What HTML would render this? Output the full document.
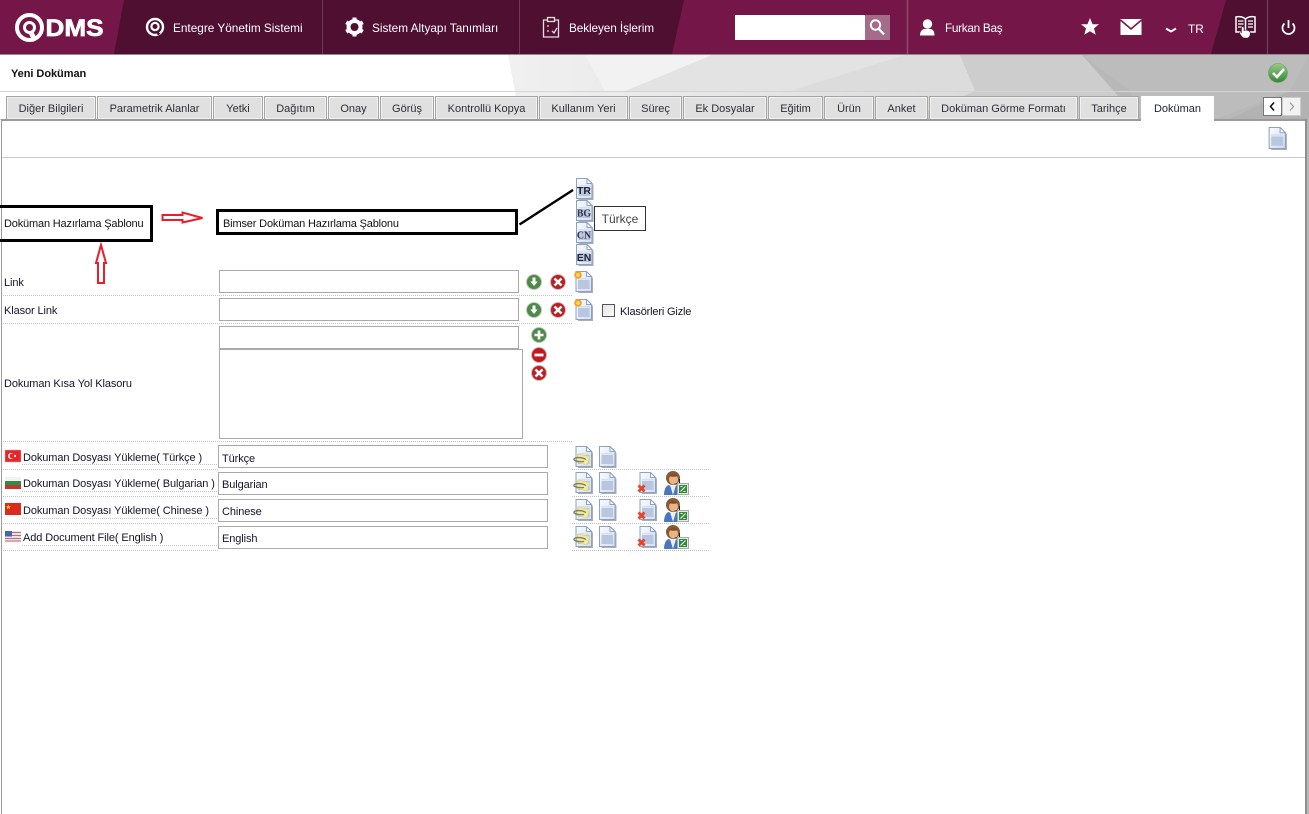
<!DOCTYPE html>
<html lang="tr"><head><meta charset="utf-8"><title>Yeni Doküman</title>
<style>
html,body{margin:0;padding:0;background:#fff;overflow:hidden}
body{width:1309px;height:814px;position:relative;font-family:"Liberation Sans",sans-serif;font-size:11px;letter-spacing:-.1px;color:#14142a}
.a{position:absolute}
.t{position:absolute;white-space:nowrap;line-height:14px}
.n{position:absolute;white-space:nowrap;color:#fff;font-size:11.8px;letter-spacing:0;line-height:16px;top:20px}
.tab{position:absolute;top:96px;height:23px;box-sizing:border-box;border:1px solid #a4a4a4;border-bottom:0;box-shadow:inset 0 0 0 1px #f1f1f1;background:#e0e0e0;text-align:center;font-size:11px;letter-spacing:0;line-height:24px;color:#2e2e3a;white-space:nowrap}
.tab.on{background:#fff;border-color:#fff;box-shadow:none;height:25px;z-index:3;color:#22223a}
.in{position:absolute;box-sizing:border-box;border:1px solid #a9a9a9;background:#fff}
.dot{position:absolute;height:0;border-top:1px dotted #c4c4c4}
.blk{position:absolute;box-sizing:border-box;border:3px solid #000;background:#fff}
svg{position:absolute;overflow:visible}
</style></head><body>
<svg width="0" height="0" style="position:absolute"><defs>
<linearGradient id="pg" x1="0" y1="0" x2="1" y2="1"><stop offset="0" stop-color="#fafcff"/><stop offset="1" stop-color="#d3deef"/></linearGradient>
<symbol id="doc" viewBox="0 0 18 22"><path d="M2 1h10l5 5v15H2z" fill="#6f7688" opacity=".6" transform="translate(1 1)"/><path d="M1 .5h10.500l5 5v15H1z" fill="url(#pg)" stroke="#8da1c4"/><path d="M11.500.5v5h5z" fill="#fff" stroke="#8da1c4"/><rect x="3" y="9" width="11.500" height="9" fill="#b8c6e0"/><rect x="3" y="7" width="11.500" height="1.500" fill="#d5dff0"/></symbol>
<symbol id="clip" viewBox="0 0 20 22"><use href="#doc" x="2" y="0" width="18" height="22"/><path d="M4.500 8l12 2.500-2 8.500-11-2.500z" fill="#efe99b" stroke="#d2cc76" stroke-width=".5"/><path d="M13 13.500C9 11 2 11 1 13c-1 2 5 3 10 2.500" fill="none" stroke="#7b7b70" stroke-width="1.300"/></symbol>
<symbol id="docx" viewBox="0 0 20 22"><use href="#doc" x="2" y="0" width="18" height="22"/><path d="M1.500 13.500l6 6M7.500 13.500l-6 6" stroke="#e8432a" stroke-width="2.800"/></symbol>
<symbol id="docs" viewBox="0 0 20 22"><use href="#doc" x="1" y="0" width="18" height="22"/><circle cx="4" cy="4" r="3.800" fill="#f79f2b"/><circle cx="4" cy="4" r="1.900" fill="#f6de52"/></symbol>
<symbol id="dn" viewBox="0 0 16 16"><circle cx="8" cy="8" r="7.500" fill="#4c8a48" stroke="#bfc9bd"/><path d="M6.500 3.500h3v4h2.200L8 12 4.300 7.500h2.200z" fill="#fff"/></symbol>
<symbol id="xx" viewBox="0 0 16 16"><circle cx="8" cy="8" r="7.500" fill="#bd1d24" stroke="#c9b9b9"/><path d="M4.500 4.500l7 7M11.500 4.500l-7 7" stroke="#fff" stroke-width="2.600"/></symbol>
<symbol id="pl" viewBox="0 0 16 16"><circle cx="8" cy="8" r="7.500" fill="#4c8a48" stroke="#bfc9bd"/><path d="M8 3.500v9M3.500 8h9" stroke="#fff" stroke-width="2.600"/></symbol>
<symbol id="mi" viewBox="0 0 16 16"><circle cx="8" cy="8" r="7.500" fill="#c5161d" stroke="#c9b9b9"/><path d="M3.500 8h9" stroke="#fff" stroke-width="2.800"/></symbol>
<symbol id="usr" viewBox="0 0 25 24"><path d="M0 24c0-7 3-10 5-10l4 3 4-3c2 0 3 3 3 10z" fill="#4a76c0"/><path d="M6 14h6l-3 10z" fill="#eee"/><ellipse cx="9" cy="7" rx="7" ry="7" fill="#8a5a35"/><ellipse cx="9.500" cy="8.500" rx="4.500" ry="5" fill="#e9b585"/><path d="M5 5c3-3 7-2 9 0-3 1-6 1-9 0z" fill="#7a4d2c"/><path d="M15.500 8v5h-5" fill="none" stroke="#222"/><rect x="13.500" y="12.500" width="11" height="11" fill="#e9e9e9" stroke="#aaa"/><rect x="15" y="14" width="8" height="8" fill="#2f8a35"/><path d="M16.500 20.500l5-5M16.500 15.500h2M21.500 20.500h-2" stroke="#fff"/></symbol>
</defs></svg>

<!-- header -->
<svg style="left:0;top:0" width="1309" height="55">
<rect width="1309" height="54" fill="#741748"/>
<path d="M124 0H684L672 54H114z" fill="#4e0f30"/>
<path d="M1226 0H1309V54H1211z" fill="#4e0f30"/>
<path d="M322.500 0V54M519.500 0V54" stroke="#6d3a55"/>
<path d="M907.500 0V54" stroke="#8f4a69" stroke-width="1.500"/>
<path d="M1267.500 0V54" stroke="#74405c" stroke-width="1.200"/>
<rect y="54" width="1309" height="1" fill="#8d8d8d"/>
<!-- logo -->
<circle cx="29.500" cy="27.500" r="12.500" fill="none" stroke="#fff" stroke-width="4"/>
<circle cx="29.500" cy="27.500" r="5" fill="none" stroke="#fff" stroke-width="3"/>
<path d="M28 32l5 10 4-3-4-8z" fill="#fff"/>
<text x="45.500" y="36" font-family="Liberation Sans" font-weight="700" font-size="24" textLength="58" lengthAdjust="spacingAndGlyphs" fill="#fff" stroke="#fff" stroke-width=".7" letter-spacing="0">DMS</text>
<!-- q icon -->
<circle cx="155" cy="27" r="8" fill="none" stroke="#fff" stroke-width="2.400"/>
<circle cx="155" cy="26.500" r="3.600" fill="none" stroke="#fff" stroke-width="2.200"/>
<path d="M155 30.500l3 5 2.500-2z" fill="#4e0f30"/>
<!-- gear -->
<g transform="translate(354.500 27)" fill="#fff"><circle r="6.200" fill="none" stroke="#fff" stroke-width="3.600"/>
<rect x="-2" y="-9.500" width="4" height="19"/><rect x="-2" y="-9.500" width="4" height="19" transform="rotate(60)"/><rect x="-2" y="-9.500" width="4" height="19" transform="rotate(120)"/><circle r="4" fill="#4e0f30"/></g>
<!-- clipboard -->
<g fill="none" stroke="#e6dce2" stroke-width="1.300"><path d="M547 20h-3.500v17h15V20H555"/><rect x="547.500" y="17.500" width="7" height="4"/><path d="M547 26h2M547 31h2M552 31l2 2 3-5"/></g>
<!-- search -->
<rect x="735" y="15" width="130" height="25" fill="#fff"/>
<rect x="865" y="15" width="25" height="25" fill="#a56c89"/>
<circle cx="875.500" cy="25" r="4.700" fill="none" stroke="#fff" stroke-width="2"/><path d="M879 29l5 5.500" stroke="#fff" stroke-width="2.400"/>
<!-- user -->
<circle cx="927.500" cy="24" r="4.700" fill="#fff"/><path d="M920 35.500c0-5 3-6.500 4.500-6.500h6c1.500 0 4 1.500 4 6.500z" fill="#fff"/>
<!-- star -->
<path d="M1090 18l2.500 6.200h6.500l-5 4.200 1.700 6.400-5.700-3.600-5.700 3.600 1.700-6.400-5-4.200h6.500z" fill="#fff"/>
<!-- mail -->
<rect x="1120.500" y="19" width="21" height="16" fill="#fff"/><path d="M1120.500 20l10.500 9 10.500-9" fill="none" stroke="#741748" stroke-width="1.600"/>
<!-- chevron -->
<path d="M1166 28.500l5 3 5-3" fill="none" stroke="#fff" stroke-width="2"/>
<!-- book -->
<g fill="none" stroke="#fff" stroke-width="1.500"><path d="M1245.500 19c-2-2-6-3-9.500-2v15h6.500l3 1 3-1h6.500V17c-3.500-1-7.500 0-9.500 2v14"/></g>
<path d="M1238 21h5.500M1238 24h5.500M1238 27h5.500M1248 21h5M1248 24h5M1248 27h5" stroke="#fff" stroke-width="1.200"/>
<path d="M1241.500 27c1-1 2.500 0 2.500 1v2.500c2-1 5 0 6 1.500 1 2 0 4.500-2 6h-4.500c-2-1-3-3-4-5 0-1 1-1.500 2-.5z" fill="#fff" stroke="#4e0f30" stroke-width=".6"/>
<!-- power -->
<path d="M1284.500 23.500a6 6 0 1 0 8 0" fill="none" stroke="#fff" stroke-width="1.800"/><path d="M1288.500 20v8" stroke="#fff" stroke-width="1.800"/>
</svg>
<span class="n" style="left:173px">Entegre Yönetim Sistemi</span>
<span class="n" style="left:372px">Sistem Altyapı Tanımları</span>
<span class="n" style="left:569px;letter-spacing:-.1px">Bekleyen İşlerim</span>
<span class="n" style="left:945px;letter-spacing:-.3px">Furkan Baş</span>
<span class="n" style="left:1188px;top:21px">TR</span>

<!-- polygon band -->
<svg style="left:0;top:55px" width="1309" height="66">
<defs><linearGradient id="bg" gradientUnits="userSpaceOnUse" x1="508" y1="0" x2="1000" y2="0"><stop offset="0" stop-color="#f0f0f0"/><stop offset=".5" stop-color="#e6e6e6"/><stop offset="1" stop-color="#d9d9d9"/></linearGradient></defs>
<rect width="1309" height="66" fill="#fff"/>
<path d="M508 0L515 36 517 66H1309V0z" fill="url(#bg)"/>
<path d="M585 0H712L625 36H605z" fill="#f2f2f2"/>
<path d="M712 0H905L790 36H625z" fill="#e3e3e3"/>
<path d="M905 0H965L975 36H790z" fill="#dcdcdc"/>
<path d="M960 0H1082L1140 66H905L975 36z" fill="#cdcdcd"/>
<path d="M1082 0H1309V66H1140z" fill="#b8b8b8"/>
<path d="M1082 0L1130 36 1145 66H1210L1290 36 1309 0z" fill="#bcbcbc"/>
<path d="M1225 66L1290 36H1309V66z" fill="#b2b2b2"/>
<rect y="36" width="1309" height="1" fill="#d4d4d4"/>
</svg>
<span class="t" style="left:11px;top:67px;font-weight:700;font-size:11px;color:#111;letter-spacing:-.05px">Yeni Doküman</span>
<svg style="left:1268px;top:62px" width="20" height="22"><defs><linearGradient id="gk" x1="0" y1="0" x2="0" y2="1"><stop offset="0" stop-color="#9cc78c"/><stop offset="1" stop-color="#2f8a32"/></linearGradient></defs><circle cx="10" cy="11" r="9.500" fill="url(#gk)" stroke="#6d9b63" stroke-width=".6"/><path d="M5 11l4 4 7-8" fill="none" stroke="#fff" stroke-width="2.600"/></svg>

<!-- tabs -->
<div class="tab" style="left:6px;width:90px">Diğer Bilgileri</div>
<div class="tab" style="left:97px;width:115px">Parametrik Alanlar</div>
<div class="tab" style="left:213px;width:50px">Yetki</div>
<div class="tab" style="left:264px;width:63px">Dağıtım</div>
<div class="tab" style="left:328px;width:51px">Onay</div>
<div class="tab" style="left:380px;width:54px">Görüş</div>
<div class="tab" style="left:435px;width:103px">Kontrollü Kopya</div>
<div class="tab" style="left:539px;width:89px">Kullanım Yeri</div>
<div class="tab" style="left:629px;width:53px">Süreç</div>
<div class="tab" style="left:683px;width:84px">Ek Dosyalar</div>
<div class="tab" style="left:768px;width:55px">Eğitim</div>
<div class="tab" style="left:824px;width:50px">Ürün</div>
<div class="tab" style="left:875px;width:53px">Anket</div>
<div class="tab" style="left:929px;width:149px">Doküman Görme Formatı</div>
<div class="tab" style="left:1079px;width:60px">Tarihçe</div>
<svg style="left:1263px;top:97px" width="38" height="19">
<rect x=".5" y=".5" width="18" height="18" fill="#fff" stroke="#777"/><path d="M11 5.500L7.500 9.500l3.500 4" fill="none" stroke="#111" stroke-width="1.600"/>
<rect x="19.500" y=".5" width="18" height="18" fill="#f2f2f2" stroke="#ccc"/><path d="M27 5.500l3.500 4-3.500 4" fill="none" stroke="#999" stroke-width="1.200"/></svg>

<!-- content frame -->
<div class="a" style="left:0;top:119px;width:1309px;height:695px;box-sizing:border-box;border-top:2px solid #9a9a9a;border-left:2px solid #fff;background:#fff"></div>
<div class="a" style="left:1px;top:119px;width:1px;height:695px;background:#9a9a9a;z-index:2"></div>
<div class="a" style="left:1305px;top:119px;width:2px;height:695px;background:#8e8e8e;z-index:2"></div>
<div class="a" style="left:1307px;top:119px;width:2px;height:695px;background:#b8b8b8;z-index:2"></div>
<div class="tab on" style="left:1141px;width:73px">Doküman</div>
<div class="a" style="left:2px;top:157px;width:1303px;height:1px;background:#c8c8c8"></div>
<svg style="left:1268px;top:127px" width="19" height="23"><use href="#doc" width="19" height="23"/></svg>

<!-- highlighted row -->
<div class="blk" style="left:0;top:205px;width:153px;height:37px;border-left:0;background:transparent;z-index:3"></div>
<span class="t" style="left:4px;top:217px;color:#111;letter-spacing:-.17px">Doküman Hazırlama Şablonu</span>
<div class="blk" style="left:216px;top:209px;width:302px;height:26px"></div>
<span class="t" style="left:223px;top:217px;color:#111;letter-spacing:-.16px">Bimser Doküman Hazırlama Şablonu</span>
<svg style="left:0;top:170px" width="700" height="120">
<path d="M162.500 45h20v-2.500l20 5.500-20 4.500v-2.500h-20z" fill="#fff" stroke="#ed1c2c" stroke-width="2"/>
<path d="M101 75l-5 18h2v20h6V93h2z" fill="#fff" stroke="#ed1c2c" stroke-width="2"/>
<path d="M519.500 54.500L573 20" stroke="#000" stroke-width="2.400"/></svg>

<!-- language file icons -->
<svg style="left:575px;top:178px" width="20" height="88">
<use href="#doc" width="19" height="22" y="0"/><use href="#doc" width="19" height="22" y="22"/><use href="#doc" width="19" height="22" y="44"/><use href="#doc" width="19" height="22" y="66"/>
<g font-family="Liberation Sans" font-weight="700" fill="#222233" text-anchor="middle" letter-spacing="0"><text x="9" y="16" font-size="10.500">TR</text></g>
<g font-family="Liberation Serif" font-weight="700" fill="#333344" text-anchor="middle" letter-spacing="0"><text x="9" y="38.500" font-size="10">BG</text><text x="9" y="60.500" font-size="10">CN</text></g>
<g font-family="Liberation Sans" font-weight="700" fill="#222233" text-anchor="middle" letter-spacing="0"><text x="9" y="83" font-size="10.500">EN</text></g>
</svg>
<div class="a" style="left:594px;top:206px;width:52px;height:25px;box-sizing:border-box;border:1px solid #333;background:#fff;text-align:center;line-height:24px;font-size:12px;letter-spacing:0;color:#444;z-index:2">Türkçe</div>

<!-- Link rows -->
<span class="t" style="left:4px;top:276px">Link</span>
<div class="in" style="left:219px;top:270px;width:300px;height:23px"></div>
<div class="dot" style="left:3px;top:295px;width:569px"></div>
<svg style="left:526px;top:274px" width="16" height="16"><use href="#dn" width="16" height="16"/></svg>
<svg style="left:550px;top:274px" width="16" height="16"><use href="#xx" width="16" height="16"/></svg>
<svg style="left:574px;top:271px" width="20" height="22"><use href="#docs" width="20" height="22"/></svg>

<span class="t" style="left:4px;top:304px">Klasor Link</span>
<div class="in" style="left:219px;top:298px;width:300px;height:23px"></div>
<div class="dot" style="left:3px;top:323px;width:569px"></div>
<svg style="left:526px;top:302px" width="16" height="16"><use href="#dn" width="16" height="16"/></svg>
<svg style="left:550px;top:302px" width="16" height="16"><use href="#xx" width="16" height="16"/></svg>
<svg style="left:574px;top:299px" width="20" height="22"><use href="#docs" width="20" height="22"/></svg>
<div class="a" style="left:602px;top:304px;width:13px;height:13px;box-sizing:border-box;border:1px solid #555;background:linear-gradient(135deg,#e6e6e6,#fafafa)"></div>
<span class="t" style="left:620px;top:305px;letter-spacing:-.17px">Klasörleri Gizle</span>

<!-- shortcut folder -->
<span class="t" style="left:4px;top:377px">Dokuman Kısa Yol Klasoru</span>
<div class="in" style="left:219px;top:326px;width:300px;height:23px"></div>
<div class="in" style="left:219px;top:349px;width:304px;height:90px"></div>
<svg style="left:531px;top:327px" width="16" height="16"><use href="#pl" width="16" height="16"/></svg>
<svg style="left:531px;top:347px" width="16" height="16"><use href="#mi" width="16" height="16"/></svg>
<svg style="left:531px;top:365px" width="16" height="16"><use href="#xx" width="16" height="16"/></svg>
<div class="dot" style="left:3px;top:441px;width:569px"></div>

<!-- doc rows -->
<svg style="left:5px;top:450px" width="16" height="12"><rect width="16" height="12" fill="#e8232a" stroke="#d9b0b0" stroke-width=".5"/><circle cx="6" cy="6" r="3" fill="#fff"/><circle cx="7" cy="6" r="2.400" fill="#e8232a"/><circle cx="10" cy="6" r="1.100" fill="#fff"/></svg>
<span class="t" style="left:23px;top:451px">Dokuman Dosyası Yükleme( Türkçe )</span>
<div class="in" style="left:218px;top:445px;width:330px;height:23px"></div>
<span class="t" style="left:222px;top:452px">Türkçe</span>
<div class="dot" style="left:22px;top:464px;width:195px"></div>
<div class="dot" style="left:3px;top:469px;width:215px"></div>
<div class="dot" style="left:572px;top:469px;width:137px"></div>
<svg style="left:573px;top:446px" width="20" height="22"><use href="#clip" width="20" height="22"/></svg>
<svg style="left:598px;top:446px" width="19" height="22"><use href="#doc" width="19" height="22"/></svg>

<svg style="left:5px;top:476px" width="16" height="13"><rect width="16" height="4" y="1" fill="#f2f2f2"/><rect width="16" height="4" y="5" fill="#2e8b48"/><rect width="16" height="4" y="9" fill="#c9342a"/></svg>
<span class="t" style="left:23px;top:477px">Dokuman Dosyası Yükleme( Bulgarian )</span>
<div class="in" style="left:218px;top:472px;width:330px;height:23px"></div>
<span class="t" style="left:222px;top:478px">Bulgarian</span>
<div class="dot" style="left:22px;top:491px;width:195px"></div>
<div class="dot" style="left:3px;top:496px;width:215px"></div>
<div class="dot" style="left:572px;top:496px;width:137px"></div>
<svg style="left:573px;top:472px" width="20" height="22"><use href="#clip" width="20" height="22"/></svg>
<svg style="left:598px;top:472px" width="19" height="22"><use href="#doc" width="19" height="22"/></svg>
<svg style="left:637px;top:472px" width="20" height="22"><use href="#docx" width="20" height="22"/></svg>
<svg style="left:664px;top:471px" width="25" height="24"><use href="#usr" width="25" height="24"/></svg>

<svg style="left:5px;top:503px" width="16" height="12"><rect width="16" height="12" fill="#dc2a1e"/><path d="M3 2l1 2 2 .2-1.500 1.300.5 2-2-1-2 1 .5-2L0 4.200 2 4z" fill="#f7d21f" transform="translate(1 0) scale(.8)"/></svg>
<span class="t" style="left:23px;top:504px">Dokuman Dosyası Yükleme( Chinese )</span>
<div class="in" style="left:218px;top:499px;width:330px;height:23px"></div>
<span class="t" style="left:222px;top:505px">Chinese</span>
<div class="dot" style="left:22px;top:518px;width:195px"></div>
<div class="dot" style="left:3px;top:523px;width:215px"></div>
<div class="dot" style="left:572px;top:523px;width:137px"></div>
<svg style="left:573px;top:499px" width="20" height="22"><use href="#clip" width="20" height="22"/></svg>
<svg style="left:598px;top:499px" width="19" height="22"><use href="#doc" width="19" height="22"/></svg>
<svg style="left:637px;top:499px" width="20" height="22"><use href="#docx" width="20" height="22"/></svg>
<svg style="left:664px;top:498px" width="25" height="24"><use href="#usr" width="25" height="24"/></svg>

<svg style="left:5px;top:531px" width="16" height="11"><rect width="16" height="11" fill="#e4e4ee"/><path d="M0 1.500h16M0 4.500h16M0 7.500h16M0 10h16" stroke="#c86a72"/><rect width="7" height="5.500" fill="#4a66a8"/></svg>
<span class="t" style="left:23px;top:531px">Add Document File( English )</span>
<div class="in" style="left:218px;top:526px;width:330px;height:23px"></div>
<span class="t" style="left:222px;top:532px">English</span>
<div class="dot" style="left:22px;top:545px;width:195px"></div>
<div class="dot" style="left:3px;top:550px;width:215px"></div>
<div class="dot" style="left:572px;top:550px;width:137px"></div>
<svg style="left:573px;top:526px" width="20" height="22"><use href="#clip" width="20" height="22"/></svg>
<svg style="left:598px;top:526px" width="19" height="22"><use href="#doc" width="19" height="22"/></svg>
<svg style="left:637px;top:526px" width="20" height="22"><use href="#docx" width="20" height="22"/></svg>
<svg style="left:664px;top:525px" width="25" height="24"><use href="#usr" width="25" height="24"/></svg>
</body></html>
